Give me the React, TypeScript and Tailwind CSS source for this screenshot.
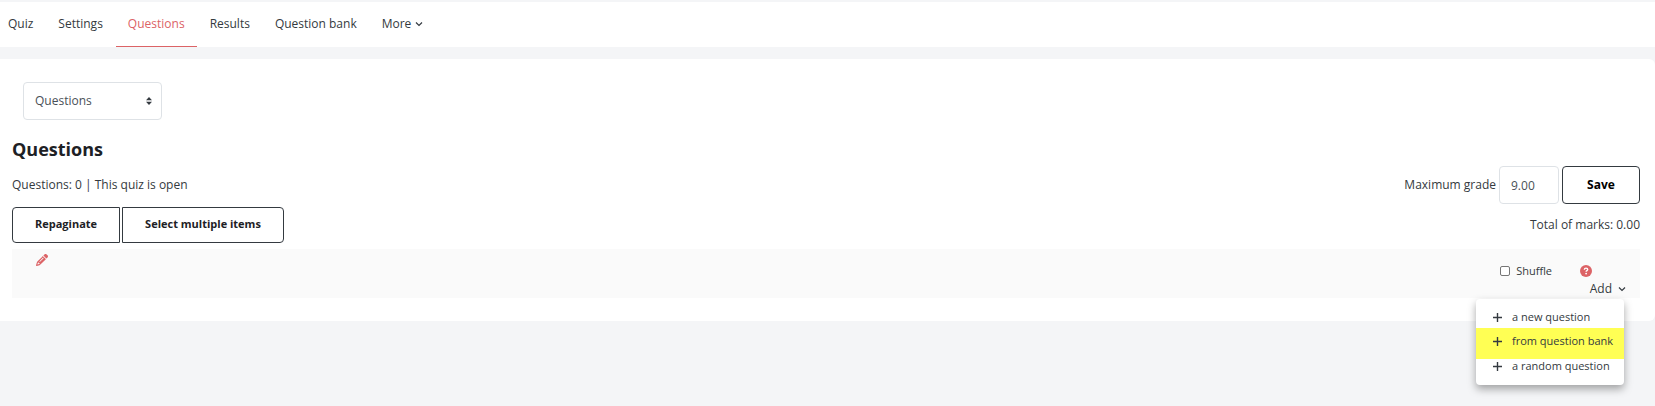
import { FaPencil } from "react-icons/fa6";

const tabs = ["Quiz", "Settings", "Questions", "Results", "Question bank"];

const addOptions = [
  { label: "a new question", className: "h-[29px] pt-[11px]" },
  { label: "from question bank", className: "h-[31px] bg-[#ffff54] pt-[6px]" },
  { label: "a random question", className: "h-[26px]" },
];

function ChevronIcon() {
  return (
    <svg viewBox="0 0 8 8" className="h-2 w-2" fill="none" stroke="currentColor" strokeWidth="1.2">
      <path d="M1 2.5 4 5.5 7 2.5" />
    </svg>
  );
}

function PlusIcon() {
  return (
    <svg viewBox="0 0 9 9" className="h-[9px] w-[9px]" fill="none" stroke="currentColor" strokeWidth="1.4">
      <path d="M4.5 0v9M0 4.5h9" />
    </svg>
  );
}

function SortIcon() {
  return (
    <svg viewBox="0 0 6 8" className="pointer-events-none absolute right-[10px] top-[15px] h-2 w-[6px]" fill="#343a40">
      <path d="M3 0 6 3.3H0zM3 8 0 4.7h6z" />
    </svg>
  );
}

function HelpIcon() {
  return (
    <svg viewBox="0 0 12 12" className="h-3 w-3">
      <circle cx="6" cy="6" r="6" fill="#dc6366" />
      <path d="M4.3 4.7C4.4 3.6 5.1 3.1 6 3.1c1 0 1.7.6 1.7 1.4C7.7 5.6 6.1 5.6 6.1 6.8" fill="none" stroke="#fff" strokeWidth="1.4" />
      <circle cx="6.1" cy="8.6" r=".9" fill="#fff" />
    </svg>
  );
}

function TabBar() {
  return (
    <nav className="overflow-hidden bg-white">
      <ul className="-ml-1 flex h-[45px] gap-px">
        {tabs.map((tab) => (
          <li key={tab} className="flex">
            <a
              href="#"
              className={
                tab === "Questions"
                  ? "flex items-center border-b border-[#dc6366] px-3 pb-px text-[#dc6366]"
                  : "flex items-center border-b border-transparent px-3 pb-px"
              }
            >
              {tab}
            </a>
          </li>
        ))}
        <li className="flex">
          <button type="button" className="flex items-center gap-1 border-b border-transparent px-3 pb-px">
            More
            <ChevronIcon />
          </button>
        </li>
      </ul>
    </nav>
  );
}

function AddMenu() {
  return (
    <ul className="absolute right-4 top-full z-10 mt-px w-[148px] overflow-hidden rounded-sm bg-white text-[11px] leading-[14px] shadow-[0_4px_8px_rgba(0,0,0,0.35)]">
      {addOptions.map((option) => (
        <li key={option.label} className={option.className}>
          <a href="#" className="flex items-center gap-[10px] whitespace-nowrap pl-[17px]">
            <PlusIcon />
            {option.label}
          </a>
        </li>
      ))}
    </ul>
  );
}

export default function App() {
  return (
    <div className="min-h-screen bg-[#f4f5f7] pt-[2px] font-['Open_Sans',sans-serif] text-xs leading-5 text-[#343a40]">
      <TabBar />

      <main className="mt-3 rounded-r-md bg-white pb-[23px] pl-3 pr-[15px] pt-[23px]">
        <div className="relative ml-[11px] w-[139px]">
          <select
            aria-label="Page section"
            className="h-[38px] w-full appearance-none rounded-sm border border-[#dee2e6] bg-white px-[11px] text-[#495057]"
          >
            <option>Questions</option>
          </select>
          <SortIcon />
        </div>

        <h2 className="mt-[17px] text-lg font-bold leading-6 text-[#1d2125]">Questions</h2>

        <div className="mt-[5px] flex items-center justify-between">
          <p>Questions: 0 | This quiz is open</p>
          <form className="flex items-center gap-[3px]">
            <label htmlFor="maxgrade">Maximum grade</label>
            <input
              id="maxgrade"
              type="text"
              defaultValue="9.00"
              className="h-[38px] w-[60px] rounded-sm border border-[#dee2e6] bg-white px-[11px] text-[#495057]"
            />
            <button
              type="button"
              className="h-[38px] w-[78px] rounded-sm border border-[#343a40] font-bold text-black"
            >
              Save
            </button>
          </form>
        </div>

        <div className="mt-[3px] flex items-center justify-between">
          <div className="flex gap-[2px] text-[11px] font-bold text-[#1d2125]">
            <button type="button" className="h-9 rounded-l-sm border border-[#343a40] px-[22px] pb-[2px]">
              Repaginate
            </button>
            <button type="button" className="h-9 rounded-r-sm border border-[#343a40] px-[22px] pb-[2px]">
              Select multiple items
            </button>
          </div>
          <p>Total of marks: 0.00</p>
        </div>

        <section className="relative mt-[6px] flex h-[49px] justify-between bg-[#fafafa]">
          <button type="button" aria-label="Edit heading" className="ml-6 mt-[5px] self-start text-[#dc6366]">
            <FaPencil className="h-3 w-3" />
          </button>
          <div className="flex flex-col items-end pt-3">
            <div className="mr-12 flex items-center text-[11px] leading-5">
              <input
                id="shuffle"
                type="checkbox"
                className="mr-[6px] h-[10px] w-[10px] appearance-none rounded-[2px] border border-[#767676] bg-white"
              />
              <label htmlFor="shuffle">Shuffle</label>
              <button type="button" aria-label="Help with shuffle" className="ml-7">
                <HelpIcon />
              </button>
            </div>
            <button type="button" className="mr-[14px] flex items-center gap-[6px] leading-4">
              Add
              <ChevronIcon />
            </button>
          </div>
          <AddMenu />
        </section>
      </main>
    </div>
  );
}
